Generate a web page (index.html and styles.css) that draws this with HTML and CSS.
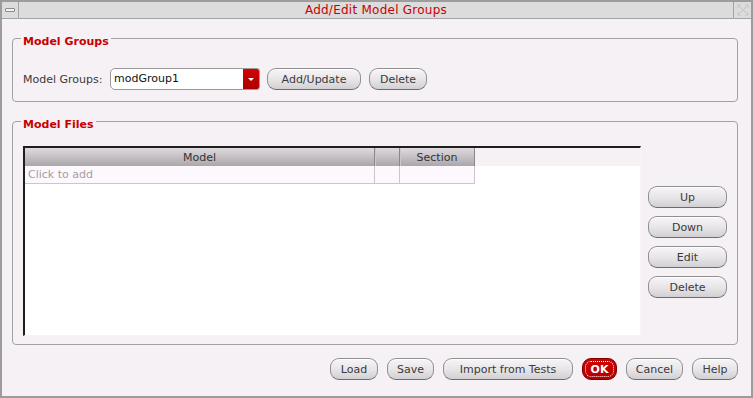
FILE: index.html
```html
<!DOCTYPE html>
<html lang="en">
<head>
  <meta charset="UTF-8" />
  <meta name="viewport" content="width=device-width, initial-scale=1.0" />
  <title>Add/Edit Model Groups</title>
  <link rel="stylesheet" href="styles.css">
</head>
<body>
  <div class="window">
    <div class="titlebar">
      <span class="tb-btn tb-min"><i></i></span>
      <span class="title">Add/Edit Model Groups</span>
      <span class="tb-btn tb-close">
        <svg width="12" height="12" viewBox="0 0 12 12">
          <path d="M1.5 1.5L10.5 10.5M10.5 1.5L1.5 10.5" stroke="#b2b2b2" stroke-width="1" stroke-dasharray="1 1" fill="none"/>
          <path d="M1 4V1H4M8 1H11V4M11 8V11H8M4 11H1V8" stroke="#c4c4c4" stroke-width="1" fill="none"/>
        </svg>
      </span>
    </div>

    <div class="content">
      <div class="group g-groups">
        <div class="legend">Model Groups</div>
        <div class="row">
          <label class="lbl">Model Groups:</label>
          <div class="combo"><span class="combo-text">modGroup1</span><span class="combo-arrow"></span></div>
          <button class="btn b-add">Add/Update</button>
          <button class="btn b-del">Delete</button>
        </div>
      </div>

      <div class="group g-files">
        <div class="legend">Model Files</div>
        <div class="files">
          <div class="table">
            <div class="thead">
              <div class="th c-model">Model</div>
              <div class="th c-blank"></div>
              <div class="th c-section">Section</div>
            </div>
            <div class="tr">
              <div class="td c-model hint">Click to add</div>
              <div class="td c-blank"></div>
              <div class="td c-section"></div>
            </div>
          </div>
          <div class="side">
            <button class="btn">Up</button>
            <button class="btn">Down</button>
            <button class="btn">Edit</button>
            <button class="btn">Delete</button>
          </div>
        </div>
      </div>

      <div class="actions">
        <button class="btn w-load">Load</button>
        <button class="btn w-save">Save</button>
        <button class="btn w-import">Import from Tests</button>
        <button class="btn ok">OK</button>
        <button class="btn w-cancel">Cancel</button>
        <button class="btn w-help">Help</button>
      </div>
    </div>
  </div>
</body>
</html>
```

FILE: styles.css
```css
*{box-sizing:border-box;margin:0;padding:0}
html,body{width:753px;height:398px;overflow:hidden}
body{font-family:"DejaVu Sans",sans-serif;font-size:11px;color:#333;background:#f5f1f5}

.window{width:753px;height:398px;border:2px solid #9c9c9c;background:#f5f1f5}

/* title bar */
.titlebar{display:flex;height:17px;background:#dcdcdc;border-bottom:1px solid #a4a4a4}
.tb-btn{flex:none;width:17px;display:flex;align-items:center;justify-content:center}
.tb-min{border-right:1px solid #a4a4a4}
.tb-min i{display:block;width:10px;height:4px;border:1px solid #8c8c8c;border-radius:1px;background:#f2f2f2}
.tb-close{width:18px;border-left:1px solid #a4a4a4}
.title{flex:1;text-align:center;color:#c80000;font-size:12px;line-height:16px;letter-spacing:.25px}

.content{padding:19px 13px 0 10px}

/* group boxes */
.group{border:1px solid #a2a2a2;border-radius:4px}
.legend{width:fit-content;margin:-4px 0 0 -2px;padding:0 2px;line-height:13px;font-weight:bold;color:#c80000;background:#f5f1f5}
.g-groups{padding:0 0 11px 10px}
.g-files{margin-top:19px;padding:0 10px 8px 10px}

.row{display:flex;align-items:center;margin-top:20px;height:22px}
.lbl{width:87px;color:#3a3a3a}
.combo{display:flex;width:150px;height:22px;margin-right:7px;border:1px solid #9a9a9a;border-radius:5px 3px 3px 5px;background:#fff;overflow:hidden}
.combo-text{flex:1;padding-left:3px;line-height:20px;color:#111}
.combo-arrow{width:16px;display:flex;align-items:center;justify-content:center;background:linear-gradient(#d80000,#a80000)}
.combo-arrow::after{content:"";border-left:3px solid transparent;border-right:3px solid transparent;border-top:3px solid #fff}

/* buttons */
.btn{height:22px;padding-top:1px;border:1px solid #909090;border-bottom-color:#6c6c6c;border-radius:9px;
  background:linear-gradient(#f7f5f7,#e6e4e6 55%,#d2d0d2);box-shadow:inset 0 1px #fff;
  font:11px "DejaVu Sans",sans-serif;color:#3a3a3a;cursor:pointer}
.b-add{width:94px;margin-right:8px}
.b-del{width:58px}
.ok{width:35px;background:linear-gradient(#d60000,#b20000);border-color:#7a0000;color:#fff;font-weight:bold;
  box-shadow:none;outline:1px dotted #fff;outline-offset:-4px}

/* model files table */
.files{display:flex;align-items:flex-start;gap:7px;margin-top:15px}
.table{flex:1;height:190px;background:#fff;border-style:solid;border-width:2px 1px 1px 2px;
  border-color:#1e1e1e #faf4fa #faf4fa #1e1e1e}
.thead{display:flex;height:18px;background:#f5f1f5}
.th{background:linear-gradient(#dedade,#aaa6aa);border-right:1px solid #8a868a;box-shadow:inset 1px 0 #ccc8cc;
  text-align:center;line-height:19px;color:#333}
.thead .c-model{box-shadow:none}
.c-model{width:350px}
.c-blank{width:25px}
.c-section{width:75px}
.tr{display:flex;height:18px}
.td{background:#fdf8fd;border-right:1px solid #cac6ca;border-bottom:1px solid #cac6ca;line-height:18px}
.hint{padding-left:3px;color:#a29ea2}

.side{display:flex;flex-direction:column;gap:8px;width:79px;margin-top:40px}
.side .btn{width:79px}

.actions{display:flex;justify-content:flex-end;gap:9px;margin-top:13px}
.w-load{width:48px}
.w-save{width:47px}
.w-import{width:130px}
.w-cancel{width:57px}
.w-help{width:46px}
```
